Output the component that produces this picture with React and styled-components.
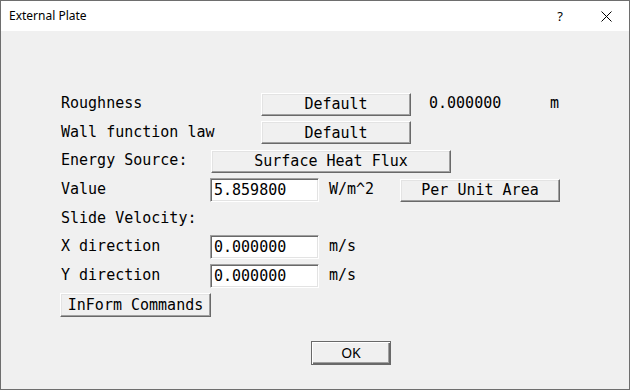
import React from 'react';
import styled, {createGlobalStyle} from 'styled-components';

const GlobalStyle = createGlobalStyle`
  html, body {
    margin: 0;
    padding: 0;
    background: #f0f0f0;
  }
  * {
    box-sizing: border-box;
  }
`;

const Window = styled.div`
  width: 630px;
  height: 390px;
  display: flex;
  flex-direction: column;
  border: 1px solid #6e6e6e;
  background: #f0f0f0;
  font-family: "DejaVu Sans Mono", monospace;
  font-size: 15px;
  color: #000;
`;

const TitleBar = styled.div`
  height: 30px;
  display: flex;
  align-items: center;
  background: #fff;
  padding-left: 8px;
  font-family: "Segoe UI", "Noto Sans", sans-serif;
  font-size: 12px;
`;

const Title = styled.div`
  flex: 1;
  margin-top: -1px;
`;

const TitleButton = styled.div`
  width: 46px;
  height: 30px;
  display: flex;
  align-items: center;
  justify-content: center;
  font-size: 13px;
`;

const Body = styled.div`
  flex: 1;
  display: flex;
  flex-direction: column;
  gap: 4.7px;
  padding: 61px 0 0 59px;
`;

const Row = styled.div`
  display: flex;
  align-items: center;
  height: 24px;
`;

const Label = styled.div`
  width: ${p => p.$w ?? 150}px;
  padding-left: 1px;
  margin-top: -2px;
  white-space: pre;
`;

const Button = styled.button`
  width: ${p => p.$w}px;
  height: ${p => p.$h ?? 23}px;
  padding: 0;
  font-family: "DejaVu Sans Mono", monospace;
  font-size: 15px;
  color: #000;
  background: #f0f0f0;
  border: 1px solid;
  border-color: #fff #696969 #696969 #fff;
  box-shadow: inset -1px -1px #a0a0a0, inset 1px 1px #e3e3e3;
  white-space: pre;
`;

const DefaultButton = styled(Button)`
  border-color: #696969;
  box-shadow: inset 1px 1px #fff, inset -1px -1px #696969, inset -2px -2px #a0a0a0;
  font-family: "Segoe UI", "Noto Sans", sans-serif;
  font-size: 14px;
`;

const Input = styled.div`
  width: 109px;
  height: 24px;
  display: flex;
  align-items: center;
  padding-left: 3px;
  background: #fff;
  border: 1px solid;
  border-color: #a0a0a0 #fff #fff #a0a0a0;
  box-shadow: inset 1px 1px #696969, inset -1px -1px #e3e3e3;
`;

const Unit = styled.div`
  width: ${p => p.$w ?? 'auto'};
  margin-left: ${p => p.$ml ?? 10}px;
  margin-top: -2px;
`;

const Footer = styled.div`
  margin: 19px 0 0 251px;
`;

const CloseIcon = () => (
  <svg width="11" height="11" viewBox="0 0 11 11">
    <path d="M0.5 0.5 L10.5 10.5 M10.5 0.5 L0.5 10.5" stroke="#000" strokeWidth="1" fill="none" />
  </svg>
);

const App = () => {
  return (
    <>
      <GlobalStyle />
      <Window>
        <TitleBar>
          <Title>External Plate</Title>
          <TitleButton>?</TitleButton>
          <TitleButton>
            <CloseIcon />
          </TitleButton>
        </TitleBar>
        <Body>
          <Row>
            <Label $w={201}>Roughness</Label>
            <Button $w={150}>Default</Button>
            <Unit $ml={18} $w="121px">0.000000</Unit>
            <Unit $ml={0}>m</Unit>
          </Row>
          <Row>
            <Label $w={201}>Wall function law</Label>
            <Button $w={150}>Default</Button>
          </Row>
          <Row>
            <Label $w={151}>Energy Source:</Label>
            <Button $w={240}>Surface Heat Flux</Button>
          </Row>
          <Row>
            <Label>Value</Label>
            <Input>5.859800</Input>
            <Unit $w="71px">W/m^2</Unit>
            <Button $w={160}>Per Unit Area</Button>
          </Row>
          <Row>
            <Label>Slide Velocity:</Label>
          </Row>
          <Row>
            <Label>X direction</Label>
            <Input>0.000000</Input>
            <Unit>m/s</Unit>
          </Row>
          <Row>
            <Label>Y direction</Label>
            <Input>0.000000</Input>
            <Unit>m/s</Unit>
          </Row>
          <Row>
            <Button $w={151} $h={24}>InForm Commands</Button>
          </Row>
          <Footer>
            <DefaultButton $w={80} $h={24}>OK</DefaultButton>
          </Footer>
        </Body>
      </Window>
    </>
  );
};

export default App;
